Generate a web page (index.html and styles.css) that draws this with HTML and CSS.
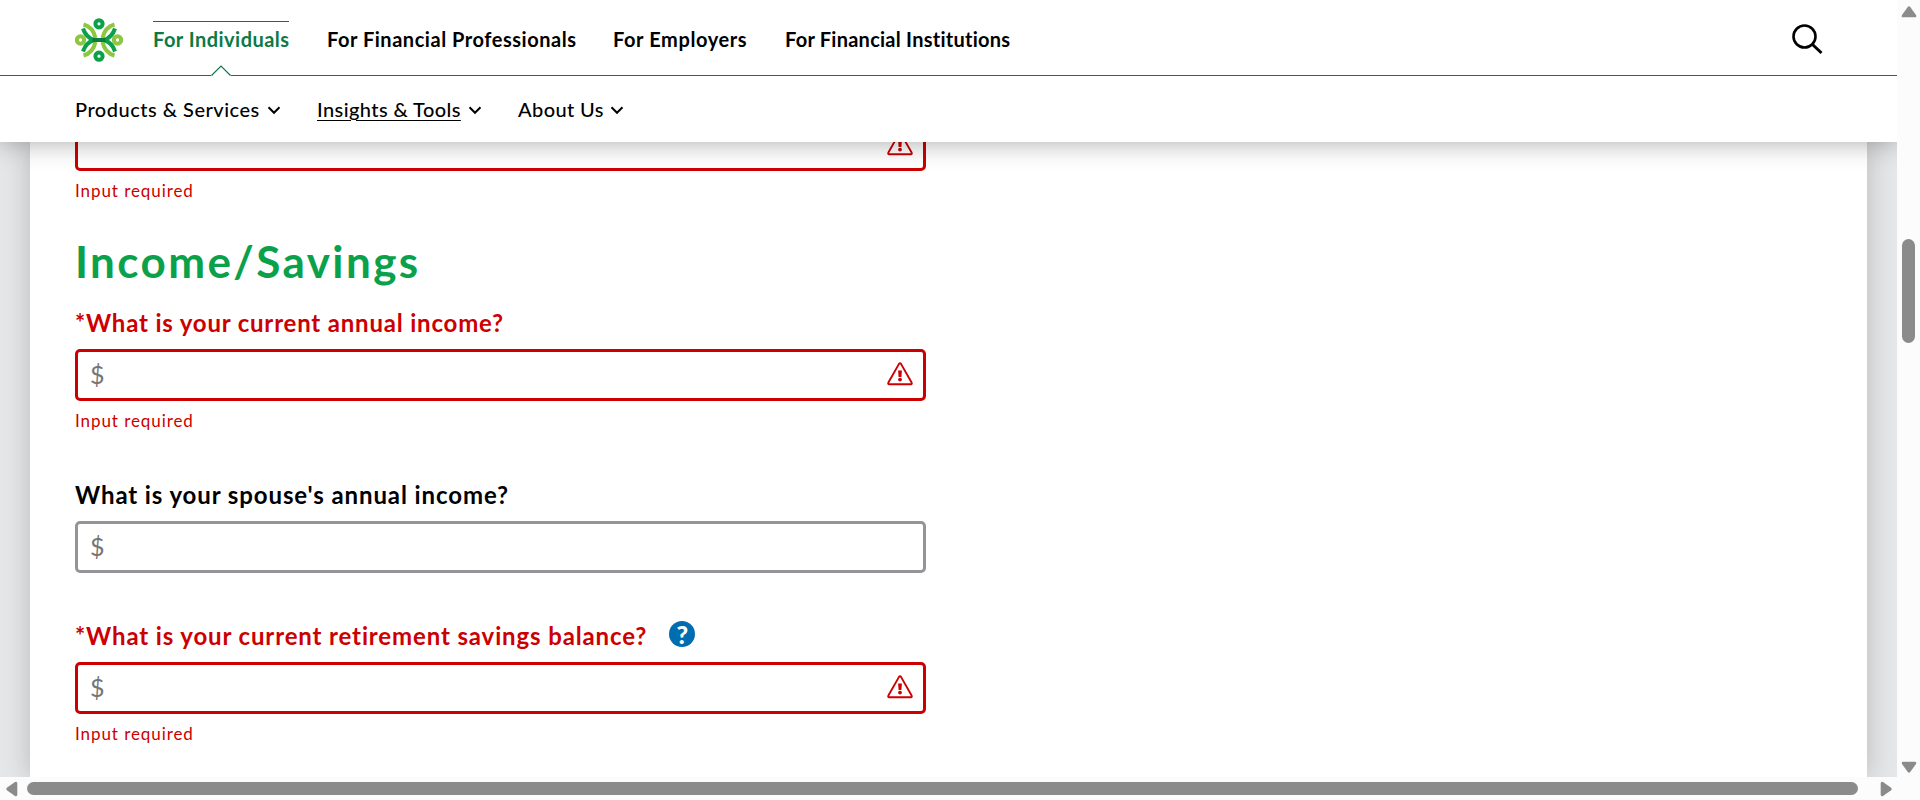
FILE: index.html
```html
<!DOCTYPE html>
<html lang="en">
<head>
<meta charset="utf-8">
<title>Retirement Calculator</title>
<link rel="stylesheet" href="styles.css">
</head>
<body>
<svg class="defs" width="0" height="0">
  <symbol id="warn" viewBox="0 0 26 24"><path d="M12 1.9Q13 .5 14 1.9L24.6 20.5Q25.3 22.3 23.8 22.3H2.2Q.7 22.3 1.4 20.5Z" fill="none" stroke="#c00" stroke-width="1.9" stroke-linejoin="round"/><path d="M11.1 8.500h3.800l-.5 6.600h-2.800z" fill="#c00"/><circle cx="13" cy="17.600" r="1.900" fill="#c00"/></symbol>
  <symbol id="chev" viewBox="0 0 14 9"><path d="M1.500 1.300 7 6.800l5.500-5.500" fill="none" stroke="#000" stroke-width="2"/></symbol>
  <symbol id="tri" viewBox="0 0 16 12"><path d="M6.600 1.200Q8-.7 9.400 1.200L15 9Q16 11.300 13.500 11.300H2.500Q0 11.300 1 9Z" fill="#8b8b8b"/></symbol>
</svg>
<div class="window">
  <div class="view">
    <header class="header">
      <div class="top">
        <svg class="logo" viewBox="0 0 48 44">
          <g fill="none" stroke="#8dc63f" stroke-width="4">
            <path d="M8.500 6.500Q18 9 20.500 20M39.500 6.500Q30 9 27.500 20M8.500 37.500Q18 35 20.500 24M39.500 37.500Q30 35 27.500 24"/>
            <circle cx="5.500" cy="22" r="3.700"/><circle cx="42.500" cy="22" r="3.700"/>
          </g>
          <g fill="none" stroke="#0ba14b" stroke-width="4">
            <path d="M8 10.500Q11 19.500 19 22Q11 24.500 8 33.500M40 10.500Q37 19.500 29 22Q37 24.500 40 33.500"/>
            <circle cx="24" cy="5.800" r="3.600"/><circle cx="24" cy="38.200" r="3.600"/>
          </g>
          <path d="M17.500 20h13v4h-13z" fill="#0b7b40"/>
        </svg>
        <nav class="primary">
          <a class="current t1">For Individuals<svg class="notch" viewBox="0 0 20 12"><path d="M0 10.500 10 .9l10 9.600V12H0z" fill="#fff"/><path d="M.5 10.500 10 1l9.500 9.500" fill="none" stroke="#0d7a45" stroke-width="1.200"/></svg></a>
          <a class="t2">For Financial Professionals</a>
          <a class="t3">For Employers</a>
          <a class="t4">For Financial Institutions</a>
        </nav>
        <svg class="search" viewBox="0 0 31 31"><circle cx="12.500" cy="12.500" r="11" fill="none" stroke="#000" stroke-width="2.600"/><path d="m20.500 20.500 9 8.500" stroke="#000" stroke-width="3"/></svg>
      </div>
      <nav class="secondary">
        <a class="s1"><span>Products &amp; Services</span><svg><use href="#chev"/></svg></a>
        <a class="s2"><span class="active">Insights &amp; Tools</span><svg><use href="#chev"/></svg></a>
        <a class="s3"><span>About Us</span><svg><use href="#chev"/></svg></a>
      </nav>
    </header>
    <main class="page">
      <div class="field invalid first"><div class="box"><span></span><svg><use href="#warn"/></svg></div><p>Input required</p></div>
      <h2><span>Income/Savings</span></h2>
      <div class="field invalid"><label><span class="l1">*What is your current annual income?</span></label><div class="box"><span>$</span><svg><use href="#warn"/></svg></div><p>Input required</p></div>
      <div class="field second"><label><span class="l2">What is your spouse's annual income?</span></label><div class="box"><span>$</span></div></div>
      <div class="field invalid third"><label><span class="l3">*What is your current retirement savings balance?</span><b class="help">?</b></label><div class="box"><span>$</span><svg><use href="#warn"/></svg></div><p>Input required</p></div>
    </main>
  </div>
  <div class="vbar"><svg><use href="#tri"/></svg><i></i><svg class="down"><use href="#tri"/></svg></div>
  <div class="hbar"><svg class="left"><use href="#tri"/></svg><i></i><svg class="right"><use href="#tri"/></svg></div>
</div>
</body>
</html>
```

FILE: styles.css
```css
* { box-sizing: border-box; }
body { margin: 0; font-family: Lato, sans-serif; color: #000; overflow: hidden; }
.defs { display: block; }
.window { display: grid; grid-template: 777px 23px / 1897px 23px; width: 1920px; height: 800px; background: #fcfcfc; }
.view { overflow: hidden; background: #e4e6e8; display: flex; flex-direction: column; }
.header { height: 142px; flex: none; background: #fff; position: relative; z-index: 2; box-shadow: 0 0 25px rgba(0,0,0,.35); }
.top { height: 76px; border-bottom: 1px solid #1a7048; display: flex; padding: 0 74px 0 75px; }
.logo { width: 48px; height: 44px; margin: 18px 30px 0 0; }
.primary { display: flex; flex: 1; padding-top: 20px; font-size: 20px; font-weight: 700; line-height: 38px; white-space: nowrap; }
.primary a { height: 55px; position: relative; }
.t1 { width: 136px; margin-right: 38px; letter-spacing: .47px; }
.t2 { width: 249px; margin-right: 37px; letter-spacing: .53px; }
.t3 { width: 134px; margin-right: 38px; letter-spacing: .6px; }
.t4 { letter-spacing: .25px; }
.current { color: #0d7a45; }
.current::before { content: ""; position: absolute; left: 0; top: 1px; width: 100%; height: 1px; background: #0d7a45; }
.notch { position: absolute; left: 58px; top: 45px; width: 20px; height: 12px; }
.search { width: 31px; height: 31px; margin-top: 24px; }
.secondary { display: flex; padding: 14px 0 0 75px; font-size: 20px; font-weight: 500; line-height: 38px; white-space: nowrap; }
.secondary a { display: flex; height: 38px; justify-content: space-between; margin-right: 36px; }
.s1 { width: 206px; letter-spacing: .5px; }
.s2 { width: 165px; letter-spacing: .42px; }
.s3 { width: 106px; letter-spacing: .4px; }
.secondary svg { width: 14px; height: 9px; margin-top: 16px; }
.active { text-decoration: underline; text-decoration-thickness: 1px; text-underline-offset: 3px; text-decoration-skip-ink: auto; }
.page { width: 1837px; margin-left: 30px; height: 635px; background: #fff; box-shadow: 0 0 25px rgba(0,0,0,.2); padding-left: 45px; }
.field { width: 851px; }
.box { height: 52px; border: 3px solid #939598; border-radius: 5px; display: flex; justify-content: space-between; padding: 0 10px 0 12px; font-size: 25px; line-height: 45px; color: #757575; font-weight: 400; }
.box svg { width: 26px; height: 24px; margin-top: 10px; }
.invalid .box { border-color: #c00; }
.invalid label, .field p { color: #c00; }
label { display: flex; height: 49px; line-height: 36px; padding-top: 5px; font-size: 24px; font-weight: 700; white-space: nowrap; letter-spacing: .81px; }
.l2 { letter-spacing: .9px; }
.l3 { letter-spacing: .87px; }
.field p { margin: 8px 0 0; font-size: 17px; line-height: 24px; font-weight: 400; letter-spacing: .93px; }
.first { height: 61px; display: flow-root; }
.first .box { margin-top: -23px; }
h2 { margin: 0; height: 97px; padding-top: 30px; font-size: 44px; line-height: 56px; font-weight: 700; color: #0ba14b; letter-spacing: 2.4px; }
.second { margin-top: 39px; }
.third { margin-top: 40px; }
.help { width: 26px; height: 26px; margin: 3px 0 0 22px; border-radius: 50%; background: #006db0; color: #fff; font-size: 25px; line-height: 26px; text-align: center; font-weight: 900; letter-spacing: 0; }
.vbar { display: flex; flex-direction: column; align-items: center; padding-top: 6px; }
.vbar svg, .hbar svg { width: 16px; height: 12px; }
.vbar i { width: 13px; height: 104px; margin: 221px 0 418px; background: #8b8b8b; border-radius: 7px; }
.down { transform: rotate(180deg); }
.hbar { display: flex; align-items: center; padding: 0 0 0 4px; }
.hbar i { width: 1831px; height: 13px; margin: 0 20px 0 7px; background: #8b8b8b; border-radius: 7px; }
.left { transform: rotate(-90deg); }
.right { transform: rotate(90deg); }
```
